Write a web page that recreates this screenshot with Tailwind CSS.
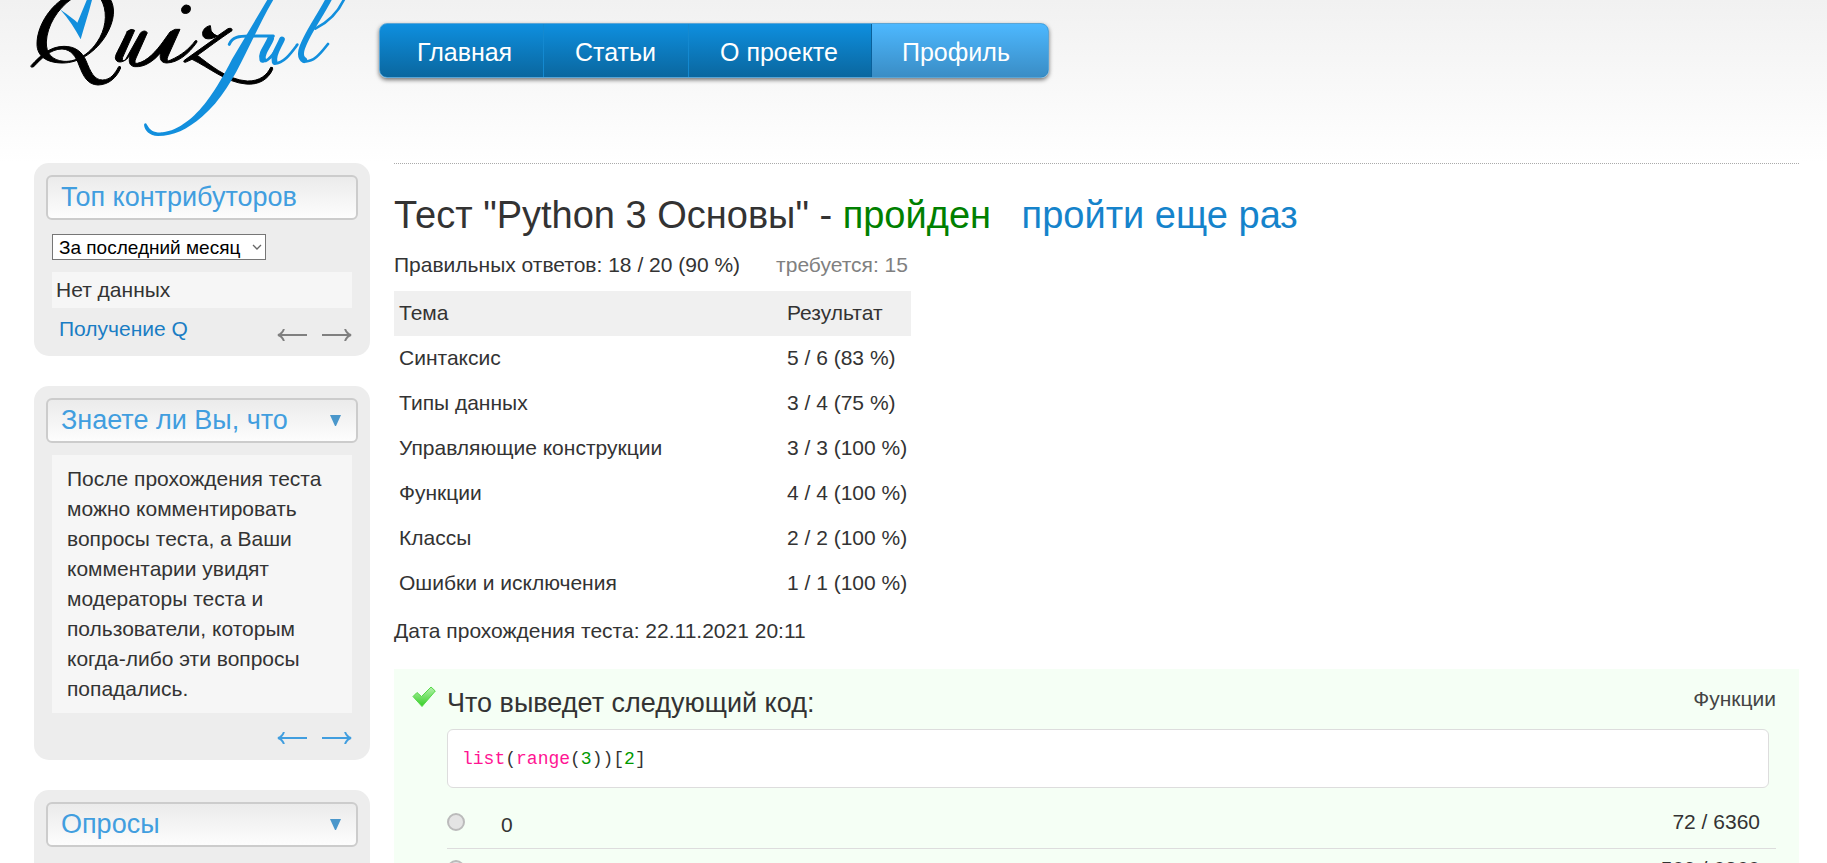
<!DOCTYPE html>
<html lang="ru">
<head>
<meta charset="utf-8">
<title>Quizful — Тест "Python 3 Основы"</title>
<script src="https://cdn.jsdelivr.net/npm/@tailwindcss/browser@4"></script>
</head>
<body class="h-screen overflow-hidden bg-white font-['Liberation_Sans',Arial,sans-serif] text-[21px] leading-[30px] text-[#333]">
<div class="bg-linear-to-b from-[#f1f1f1] to-white to-[163px] bg-no-repeat">
<header class="flex h-[163px] items-start">
  <a href="#" aria-label="Quizful" class="block w-[379px] shrink-0">
    <svg class="block h-[160px] w-[378px]" viewBox="0 0 1134 480" fill="none" stroke-linecap="round" stroke-linejoin="round">
      <g fill="#000" stroke="#000" stroke-width="3">
        <path d="M190 -4C146 24 110 82 111 134C112 168 138 188 186 189C240 190 290 152 318 106C345 60 346 22 330 -4H302C322 30 320 74 300 112C274 160 232 186 192 184C156 181 138 160 139 126C141 78 172 26 216 -4Z"/>
        <path d="M94 196C122 166 150 139 192 139C224 139 246 154 258 182C272 216 282 240 308 240C332 239 344 222 356 200Q362 197 362 204C350 232 328 254 294 255C262 254 250 228 238 198C228 170 214 148 186 147C152 147 126 174 100 201H94Z"/>
        <ellipse cx="558" cy="28" rx="14" ry="12" transform="rotate(-35 558 28)"/>
        <path d="M382 94Q394 84 404 91L368 172Q364 186 376 180L422 98Q434 88 442 98L408 174Q400 192 412 190C442 184 470 152 490 124L510 96Q526 84 540 88L504 168Q496 188 512 180C544 166 568 146 586 122Q592 120 591 126C566 162 534 188 500 189C482 188 478 176 482 158C460 184 434 202 404 200C386 198 386 182 390 166C374 190 348 192 346 174C346 162 356 152 382 94Z"/>
        <path d="M630 77C614 80 606 94 608 104C610 120 634 120 652 108L684 86Q698 82 696 92C660 116 620 146 592 166C622 188 680 240 742 243C780 244 802 224 812 202Q820 200 818 208C806 236 778 256 738 252C680 248 626 202 576 178L556 187Q548 187 553 181L654 109Q640 104 634 94Z"/>
      </g>
      <path fill="#128fdd" d="M180 28C208 48 224 60 232 68L262 -4H277C266 40 252 82 242 118C226 88 206 56 180 28Z"/>
      <path fill="#128fdd" d="M804 -4H822C790 50 764 106 738 158C700 236 664 300 606 350C562 388 520 408 474 408C448 406 434 392 432 374Q436 366 441 374C450 392 464 399 488 397C536 392 584 352 620 304C650 264 672 224 696 178Z"/>
      <g stroke="#128fdd">
        <path stroke-width="9" d="M688 133C696 112 716 107 754 108H820"/>
        <path stroke-width="20" d="M812 116C804 138 782 160 788 178"/>
        <path stroke-width="17" d="M846 118C836 142 818 164 824 186"/>
        <path stroke-width="8" d="M788 182C804 190 832 146 846 120M824 190C852 190 874 158 892 134"/>
        <path stroke-width="18" d="M988 -6C956 56 914 110 904 152Q900 174 912 180"/>
        <path stroke-width="8" d="M910 183C942 190 966 154 984 132M946 86C990 64 1018 30 1034 -6"/>
      </g>
    </svg>
  </a>
  <nav class="mt-[23px] flex h-[55px] overflow-hidden rounded-[8px] border border-[#5aa5d6] bg-linear-to-b from-[#0e8fdf] to-[#0a679f] text-[25px] leading-[57px] text-white shadow-[0_2px_4px_#0008]">
    <a href="#" class="w-[164px] border-r border-[#1489d0] pl-[37px]">Главная</a>
    <a href="#" class="w-[145px] border-r border-[#1489d0] pl-[31px]">Статьи</a>
    <a href="#" class="w-[183px] border-r border-[#0a609a] pl-[31px]">О проекте</a>
    <a href="#" class="w-[176px] bg-linear-to-b from-[#4db8ff] to-[#3a8dc5] pl-[30px]">Профиль</a>
  </nav>
</header>
<div class="flex items-start gap-6 pr-7 pl-[34px]">
  <aside class="flex w-[336px] shrink-0 flex-col gap-[30px]">
    <section class="h-[193px] rounded-[15px] bg-[#ededed] p-3">
      <h2 class="h-[45px] rounded-[6px] border-2 border-[#ccc] bg-linear-to-b from-[#ebebeb] to-[#fdfdfd] px-[13px] text-[27px] leading-[41px] text-[#419edf]">Топ контрибуторов</h2>
      <div class="mx-[6px] mt-[14px]">
        <div class="relative w-[214px]">
          <select aria-label="Период" class="block h-[26px] w-full appearance-none border border-[#767676] bg-white pt-px pl-[6px] text-[19px] leading-[24px] text-black"><option>За последний месяц</option></select>
          <svg class="pointer-events-none absolute top-[10px] right-[4px] h-[6px] w-[10px]" viewBox="0 0 10 6" fill="none" stroke="#666" stroke-width="1.3"><path d="M1 1L5 5L9 1"/></svg>
        </div>
        <p class="mt-3 h-9 bg-[#f6f6f6] pl-1 leading-9">Нет данных</p>
        <div class="mt-[6px] flex items-start justify-between pl-[7px]">
          <a href="#" class="text-[#1a7dc4]">Получение Q</a>
          <div class="mt-[15px] flex gap-[15px] text-[#808080]">
            <button aria-label="Назад" class="block"><svg class="block h-3 w-[30px]" viewBox="0 0 30 12" fill="none" stroke="currentColor" stroke-width="2"><path d="M30 6H1M7 0Q5 5 1 6Q5 7 7 12"/></svg></button>
            <button aria-label="Вперёд" class="block"><svg class="block h-3 w-[30px]" viewBox="0 0 30 12" fill="none" stroke="currentColor" stroke-width="2"><path d="M0 6H29M23 0Q25 5 29 6Q25 7 23 12"/></svg></button>
          </div>
        </div>
      </div>
    </section>
    <section class="h-[374px] rounded-[15px] bg-[#ededed] p-3">
      <h2 class="flex h-[45px] items-center justify-between rounded-[6px] border-2 border-[#ccc] bg-linear-to-b from-[#ebebeb] to-[#fdfdfd] px-[13px] text-[27px] leading-[41px] text-[#419edf]">Знаете ли Вы, что
        <button aria-label="Свернуть" class="block"><svg class="block h-[11px] w-[13px]" viewBox="0 0 13 11"><path fill="#4a97cb" d="M0 0H11L6 11H5Z"/></svg></button></h2>
      <div class="mx-[6px] mt-3">
        <p class="bg-[#f6f6f6] px-[15px] py-[9px]">После прохождения теста<br>можно комментировать<br>вопросы теста, а Ваши<br>комментарии увидят<br>модераторы теста и<br>пользователи, которым<br>когда-либо эти вопросы<br>попадались.</p>
        <div class="mt-[19px] flex justify-end gap-[15px] text-[#419edf]">
          <button aria-label="Назад" class="block"><svg class="block h-3 w-[30px]" viewBox="0 0 30 12" fill="none" stroke="currentColor" stroke-width="2"><path d="M30 6H1M7 0Q5 5 1 6Q5 7 7 12"/></svg></button>
          <button aria-label="Вперёд" class="block"><svg class="block h-3 w-[30px]" viewBox="0 0 30 12" fill="none" stroke="currentColor" stroke-width="2"><path d="M0 6H29M23 0Q25 5 29 6Q25 7 23 12"/></svg></button>
        </div>
      </div>
    </section>
    <section class="h-[200px] rounded-[15px] bg-[#ededed] p-3">
      <h2 class="flex h-[45px] items-center justify-between rounded-[6px] border-2 border-[#ccc] bg-linear-to-b from-[#ebebeb] to-[#fdfdfd] px-[13px] text-[27px] leading-[41px] text-[#419edf]">Опросы
        <button aria-label="Свернуть" class="block"><svg class="block h-[11px] w-[13px]" viewBox="0 0 13 11"><path fill="#4a97cb" d="M0 0H11L6 11H5Z"/></svg></button></h2>
    </section>
  </aside>
  <main class="min-w-0 flex-1 border-t border-dotted border-[#aaa]">
    <h1 class="mt-[29px] text-[38px] leading-[44px]">Тест "Python 3 Основы" - <span class="text-[#008000]">пройден</span> <a href="#" class="ml-5 text-[#1583cb]">пройти еще раз</a></h1>
    <p class="mt-[13px] flex gap-9">Правильных ответов: 18 / 20 (90 %)<span class="text-[#808080]">требуется: 15</span></p>
    <table class="mt-[11px] w-[517px] text-left leading-[28px]">
      <thead><tr class="h-[45px] bg-[#f0f0f0]"><th class="w-[388px] pb-[2px] pl-[5px] font-normal">Тема</th><th class="pb-[2px] pl-[5px] font-normal">Результат</th></tr></thead>
      <tbody>
        <tr class="h-[45px]"><td class="pb-[2px] pl-[5px]">Синтаксис</td><td class="pb-[2px] pl-[5px]">5 / 6 (83 %)</td></tr>
        <tr class="h-[45px]"><td class="pb-[2px] pl-[5px]">Типы данных</td><td class="pb-[2px] pl-[5px]">3 / 4 (75 %)</td></tr>
        <tr class="h-[45px]"><td class="pb-[2px] pl-[5px]">Управляющие конструкции</td><td class="pb-[2px] pl-[5px]">3 / 3 (100 %)</td></tr>
        <tr class="h-[45px]"><td class="pb-[2px] pl-[5px]">Функции</td><td class="pb-[2px] pl-[5px]">4 / 4 (100 %)</td></tr>
        <tr class="h-[45px]"><td class="pb-[2px] pl-[5px]">Классы</td><td class="pb-[2px] pl-[5px]">2 / 2 (100 %)</td></tr>
        <tr class="h-[45px]"><td class="pb-[2px] pl-[5px]">Ошибки и исключения</td><td class="pb-[2px] pl-[5px]">1 / 1 (100 %)</td></tr>
      </tbody>
    </table>
    <p class="mt-[10px]">Дата прохождения теста: 22.11.2021 20:11</p>
    <section class="mt-[23px] h-[300px] bg-[#f5fff5] pt-[15px] pr-[23px] pl-[18px]">
      <div class="flex items-start">
        <svg class="mt-[2px] mr-[11px] h-[22px] w-[24px]" viewBox="0 0 24 22"><defs><linearGradient id="tick" x1="0" y1="0" x2="0" y2="1"><stop offset="0" stop-color="#b4f2ac"/><stop offset="1" stop-color="#35cf25"/></linearGradient></defs><path fill="url(#tick)" stroke="#55d848" stroke-width="1" stroke-linejoin="round" d="M1 10.500L5 6.500L9.500 10.500L19 1L23.300 5L10 20.500Z"/></svg>
        <h2 class="text-[27px] leading-[38px]">Что выведет следующий код:</h2>
        <span class="ml-auto text-[#444]">Функции</span>
      </div>
      <div class="pl-[35px]">
        <pre class="mt-[7px] mr-[7px] h-[59px] rounded-[6px] border border-[#ddd] bg-white pl-[14px] font-['Liberation_Mono',monospace] text-[18px] leading-[59px]"><span class="text-[#ff1493]">list</span>(<span class="text-[#ff1493]">range</span>(<span class="text-[#009900]">3</span>))[<span class="text-[#009900]">2</span>]</pre>
        <div class="mt-[14px]">
          <div class="flex h-[47px] items-start border-b border-[#ddd] pt-[5px] pr-4">
            <input type="radio" id="a0" name="q1" disabled class="mt-[6px] h-[18px] w-[18px] appearance-none rounded-full border-2 border-[#bbb] bg-[#e4e4e4]">
            <label for="a0" class="ml-9 pt-[3px]">0</label>
            <span class="ml-auto">72 / 6360</span>
          </div>
          <div class="flex h-[47px] items-start border-b border-[#ddd] pt-[5px] pr-4">
            <input type="radio" id="a1" name="q1" disabled class="mt-[6px] h-[18px] w-[18px] appearance-none rounded-full border-2 border-[#bbb] bg-[#e4e4e4]">
            <label for="a1" class="ml-9 pt-[3px]">1</label>
            <span class="ml-auto">509 / 6360</span>
          </div>
        </div>
      </div>
    </section>
  </main>
</div>
</div>
</body>
</html>
